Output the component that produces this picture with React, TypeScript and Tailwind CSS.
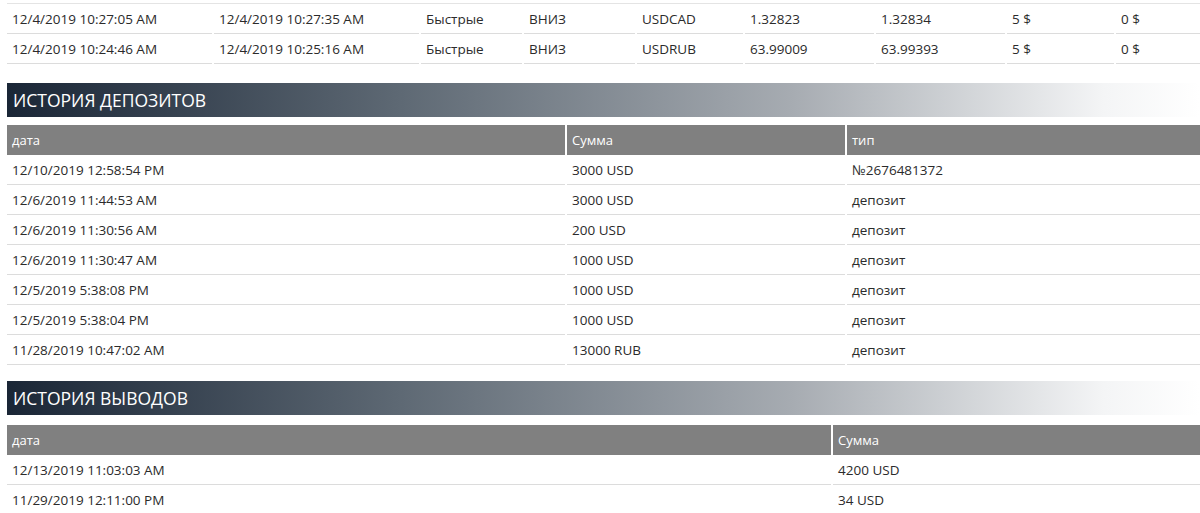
import React from 'react';

const trades = [
    ['12/4/2019 10:27:05 AM', '12/4/2019 10:27:35 AM', 'Быстрые', 'ВНИЗ', 'USDCAD', '1.32823', '1.32834', '5 $', '0 $'],
    ['12/4/2019 10:24:46 AM', '12/4/2019 10:25:16 AM', 'Быстрые', 'ВНИЗ', 'USDRUB', '63.99009', '63.99393', '5 $', '0 $'],
];

const deposits = [
    ['12/10/2019 12:58:54 PM', '3000 USD', '№2676481372'],
    ['12/6/2019 11:44:53 AM', '3000 USD', 'депозит'],
    ['12/6/2019 11:30:56 AM', '200 USD', 'депозит'],
    ['12/6/2019 11:30:47 AM', '1000 USD', 'депозит'],
    ['12/5/2019 5:38:08 PM', '1000 USD', 'депозит'],
    ['12/5/2019 5:38:04 PM', '1000 USD', 'депозит'],
    ['11/28/2019 10:47:02 AM', '13000 RUB', 'депозит'],
];

const withdrawals = [
    ['12/13/2019 11:03:03 AM', '4200 USD'],
    ['11/29/2019 12:11:00 PM', '34 USD'],
];

// заголовок секции с градиентом
function SectionTitle({ title }: { title: string }) {
    return (
        <div className="flex h-[34px] items-center bg-[linear-gradient(to_right,#1a2636_0%,#5e6974_33%,#a7acb2_66%,#f4f5f6_92%,#ffffff_100%)] px-[6px] pt-px">
            <h2 className="text-[17.5px] text-white">{title}</h2>
        </div>
    );
}

function Row({ cols, cells, head }: { cols: string; cells: string[]; head?: boolean }) {
    return (
        <div className={`grid gap-x-[2px] ${cols}`}>
            {cells.map((c, i) => (
                <div
                    key={i}
                    className={
                        head
                            ? 'flex h-[30px] items-center bg-[#808080] px-[5px] pt-px text-[13px] text-white'
                            : 'flex h-[30px] items-center border-b border-[#dcdcdc] px-[5px] pt-[2px] text-[#2b2b2b]'
                    }
                >
                    {c}
                </div>
            ))}
        </div>
    );
}

export default function App() {
    const tradeCols = 'grid-cols-[205px_205px_101px_111px_106px_129px_129px_107px_1fr]';
    const depCols = 'grid-cols-[558px_278px_1fr]';
    const wdCols = 'grid-cols-[824px_1fr]';

    return (
        <div className="min-h-screen w-[1200px] overflow-hidden bg-white pl-[7px] font-['Open_Sans','Noto_Sans',sans-serif] text-[13.5px]">
            {/* последние сделки */}
            <div className="pt-[3px]">
                <div className="h-px w-full bg-[#e4e4e4]" />
                {trades.map((r, i) => (
                    <Row key={i} cols={tradeCols} cells={r} />
                ))}
            </div>

            {/* история депозитов */}
            <div className="mt-[19px]">
                <SectionTitle title="ИСТОРИЯ ДЕПОЗИТОВ" />
                <div className="mt-[8px]">
                    <Row cols={depCols} cells={['дата', 'Сумма', 'тип']} head />
                    {deposits.map((r, i) => (
                        <Row key={i} cols={depCols} cells={r} />
                    ))}
                </div>
            </div>

            {/* история выводов */}
            <div className="mt-[16px]">
                <SectionTitle title="ИСТОРИЯ ВЫВОДОВ" />
                <div className="mt-[10px]">
                    <Row cols={wdCols} cells={['дата', 'Сумма']} head />
                    {withdrawals.map((r, i) => (
                        <Row key={i} cols={wdCols} cells={r} />
                    ))}
                </div>
            </div>
        </div>
    );
}
